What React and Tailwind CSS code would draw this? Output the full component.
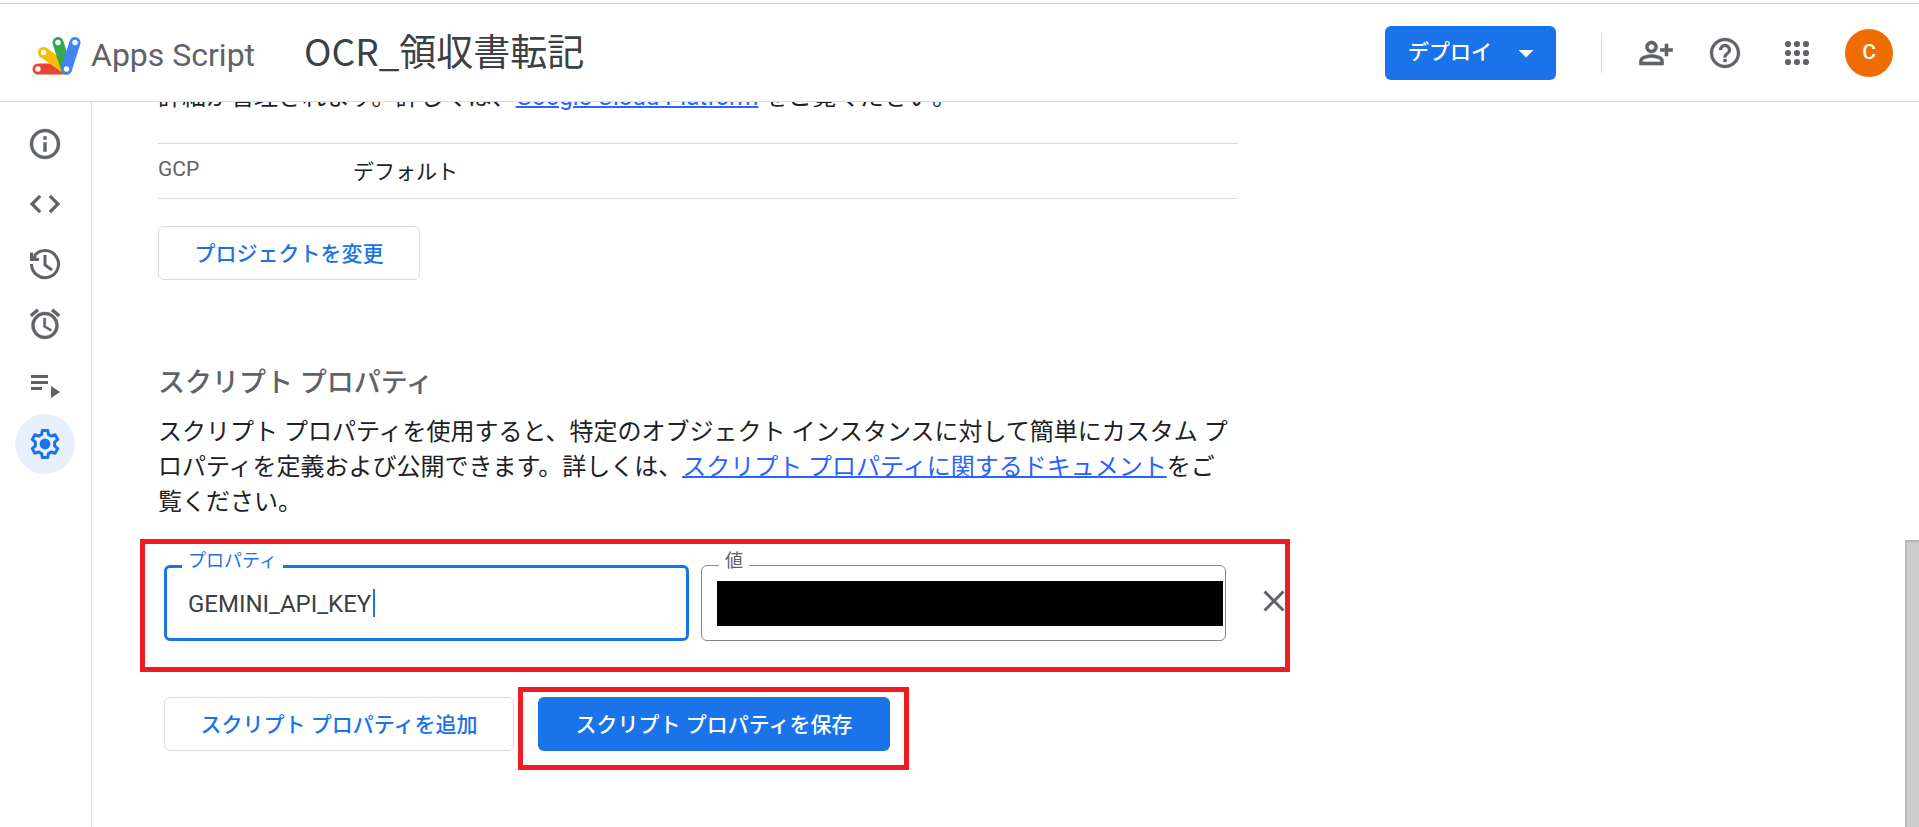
import { useState } from "react";
import { MdOutlineInfo, MdCode, MdAlarm, MdHelpOutline, MdOutlinePersonAddAlt, MdClose, MdArrowDropDown } from "react-icons/md";

// Icono de historial (flecha cuadrada + reloj)
function IconoHistorial({ className }) {
  return (
    <svg viewBox="0 0 36 36" className={className} fill="none" stroke="currentColor" strokeWidth="3">
      <path d="M4.5 18A13.5 13.5 0 1 0 7.2 10" />
      <path d="M4.5 6.5V13.500H12" />
      <path d="M5 13.5L9 9.500" />
      <path d="M18 9v10l7 5" />
    </svg>
  );
}

// Icono de ejecuciones (lista + play)
function IconoEjecuciones({ className }) {
  return (
    <svg viewBox="0 0 36 36" className={className} fill="currentColor">
      <path d="M4 9h17v3H4zM4 15h17v3H4zM4 21h11v3H4zM24 20v12l9-6z" />
    </svg>
  );
}

// Engranaje con el centro relleno
function IconoAjustes({ className }) {
  return (
    <svg viewBox="0 0 24 24" className={className}>
      <path
        fill="none"
        stroke="currentColor"
        strokeWidth="2"
        strokeLinejoin="round"
        d="M10.2 3h3.6l.5 2.7c.7.25 1.3.6 1.8 1.05l2.6-.9 1.8 3.1-2.1 1.8c.1.85.1 1.65 0 2.5l2.1 1.8-1.8 3.1-2.6-.9c-.5.45-1.1.8-1.8 1.05L13.8 21h-3.6l-.5-2.7c-.7-.25-1.3-.6-1.8-1.05l-2.6.9-1.8-3.1 2.1-1.8a9 9 0 0 1 0-2.5l-2.1-1.8 1.8-3.1 2.6.9c.5-.45 1.1-.8 1.8-1.05z"
      />
      <circle cx="12" cy="12" r="3.6" fill="currentColor" />
    </svg>
  );
}

function IconoApps({ className }) {
  return (
    <svg viewBox="0 0 36 36" className={className} fill="currentColor">
      {[9, 18, 27].map((y) => [9, 18, 27].map((x) => <circle key={`${x}-${y}`} cx={x} cy={y} r="3.1" />))}
    </svg>
  );
}

function Logo() {
  return (
    <svg viewBox="0 0 49 38" className="mt-1.5 w-[49px] h-[38px]" aria-hidden="true">
      <g strokeLinecap="round" strokeWidth="11" fill="none">
        <path d="M6 32H34" stroke="#ea4335" />
        <path d="M11.5 15.5L34.5 32" stroke="#fbbc04" />
        <path d="M26 5.5L34.5 32" stroke="#34a853" />
        <path d="M43 5.5L34.5 32" stroke="#4285f4" />
      </g>
      <g fill="#fff">
        <circle cx="6" cy="32" r="2.7" />
        <circle cx="11.5" cy="15.5" r="2.7" />
        <circle cx="26" cy="5.5" r="2.7" />
        <circle cx="43" cy="5.5" r="2.7" />
        <circle cx="34.5" cy="32" r="2.7" />
      </g>
    </svg>
  );
}

const menu = [
  { id: "info", label: "概要", Icono: MdOutlineInfo },
  { id: "editor", label: "エディタ", Icono: MdCode },
  { id: "historial", label: "プロジェクトの履歴", Icono: IconoHistorial },
  { id: "triggers", label: "トリガー", Icono: MdAlarm },
  { id: "ejecuciones", label: "実行数", Icono: IconoEjecuciones },
  { id: "ajustes", label: "プロジェクトの設定", Icono: IconoAjustes },
];

function Header() {
  return (
    <header className="flex shrink-0 items-center h-[102px] pl-8 pr-[26px] pt-1 border-b border-[#dadce0]">
      <Logo />
      <span className="ml-2.5 pt-1 text-[32px] leading-10 text-[#5f6368]">Apps Script</span>
      <h1 className="ml-[49px] pb-1.5 text-[37px] leading-[48px] text-[#3c4043] font-['Noto_Sans_CJK_JP',sans-serif]">OCR_領収書転記</h1>

      <div className="ml-auto flex items-center">
        <button className="flex items-center justify-between w-[171px] h-[54px] pl-[23px] pr-3 rounded-md bg-[#1a73e8] text-white text-[21px] font-medium">
          デプロイ
          <MdArrowDropDown className="size-9" />
        </button>
        <div className="ml-[45px] mr-9 w-px h-10 bg-[#dadce0]"></div>
        <div className="flex items-center text-[#5f6368]">
          <button aria-label="共有" className="mr-[33px]"><MdOutlinePersonAddAlt strokeWidth="0.4" className="size-9 [&>path[fill=none]]:stroke-none" /></button>
          <button aria-label="ヘルプ" className="mr-9"><MdHelpOutline strokeWidth="0.2" className="size-9 [&>path[fill=none]]:stroke-none" /></button>
          <button aria-label="Google アプリ"><IconoApps className="size-9" /></button>
        </div>
        <button className="ml-[30px] size-12 rounded-full bg-[#ef6c00] text-white text-[21px] font-medium">C</button>
      </div>
    </header>
  );
}

function Sidebar({ activo, onSelect }) {
  return (
    <nav className="flex flex-col shrink-0 items-center w-[92px] pt-3 pr-px border-r border-[#dadce0]">
      {menu.map(({ id, label, Icono }) => (
        <button
          key={id}
          aria-label={label}
          onClick={() => onSelect(id)}
          className={`flex items-center justify-center size-[60px] rounded-full ${activo === id ? "bg-[#e8f0fe] text-[#1a73e8]" : "text-[#5f6368] [&_path[fill=none]]:stroke-none"}`}
        >
          <Icono strokeWidth="0.3" className="size-9" />
        </button>
      ))}
    </nav>
  );
}

export default function App() {
  const [activo, setActivo] = useState("ajustes");
  const [propiedad, setPropiedad] = useState("GEMINI_API_KEY");
  const [valor, setValor] = useState("");

  return (
    <div lang="ja" className="flex flex-col h-screen overflow-hidden bg-white text-[#202124] font-['Roboto','Noto_Sans_CJK_JP',sans-serif]">
      <div className="shrink-0 h-1 -mb-1 border-b border-[#cccccc]"></div>
      <Header />

      <div className="flex flex-1 min-h-0">
        <Sidebar activo={activo} onSelect={setActivo} />

        <main className="flex-1 min-w-0 overflow-hidden pl-[66px]">
          <div className="max-w-[1080px]">
            {/* Proyecto de GCP */}
            <p className="-mt-[22px] text-2xl leading-[35px]">
              詳細が管理されます。詳しくは、<a href="#gcp" className="text-[#2962ff] underline decoration-2">Google Cloud Platform</a> をご覧ください。
            </p>
            <dl className="flex mt-7 h-14 border-y border-[#dadce0] text-[21px]">
              <dt className="w-[195px] pt-3 leading-[26px] text-[#5f6368]">GCP</dt>
              <dd className="pt-3 leading-8">デフォルト</dd>
            </dl>
            <button className="mt-[27px] h-[54px] w-[262px] pt-1 rounded-md border border-[#dadce0] text-[21px] font-medium text-[#1a73e8]">
              プロジェクトを変更
            </button>

            {/* Propiedades del script */}
            <h2 className="mt-[83px] text-[27px] leading-10 font-medium text-[#5f6368]">スクリプト プロパティ</h2>
            <p className="mt-3 text-2xl leading-[35px]">
              スクリプト プロパティを使用すると、特定のオブジェクト インスタンスに対して簡単にカスタム プロパティを定義および公開できます。詳しくは、<a href="#docs" className="text-[#2962ff] underline decoration-2">スクリプト プロパティに関するドキュメント</a>をご覧ください。
            </p>
          </div>

          <div className="mt-[19px] -ml-[18px] w-[1150px] h-[133px] border-5 border-[#ee1c25] pl-[19px] pt-[21px]">
            <div className="flex gap-3">
              <div className="relative shrink-0 w-[525px] h-[76px]">
                <label htmlFor="propiedad" className="absolute left-[18px] -top-4 px-1.5 bg-white text-lg leading-6 text-[#1a73e8]">プロパティ</label>
                <input
                  id="propiedad"
                  value={propiedad}
                  onChange={(e) => setPropiedad(e.target.value)}
                  className="w-full h-full px-[21px] pt-0.5 rounded-md border-3 border-[#1a73e8] text-2xl text-[#3c4043] outline-none"
                />
                {/* Cursor de texto */}
                <span className="absolute left-[209px] top-6 w-0.5 h-7 bg-[#1a73e8]"></span>
              </div>
              <div className="relative shrink-0 w-[525px] h-[76px]">
                <label htmlFor="valor" className="absolute left-[18px] -top-4 px-1.5 bg-white text-lg leading-6 text-[#5f6368]">値</label>
                <input
                  id="valor"
                  value={valor}
                  onChange={(e) => setValor(e.target.value)}
                  className="w-full h-full px-[22px] rounded-md border border-[#80868b] text-2xl outline-none"
                />
                <span className="absolute left-4 right-[3px] top-4 h-[45px] bg-black"></span>
              </div>
              <button aria-label="削除" className="shrink-0 ml-[18px] mt-[18px] size-9 text-[#5f6368]">
                <MdClose className="size-9" />
              </button>
            </div>
          </div>

          <div className="flex items-start mt-[15px] ml-1.5">
            <button className="mt-2.5 h-[54px] w-[350px] pt-1 rounded-md border border-[#dadce0] text-[21px] font-medium text-[#1a73e8]">
              スクリプト プロパティを追加
            </button>
            <div className="ml-1 h-[83px] w-[391px] border-5 border-[#ee1c25] pl-[15px] pt-[5px]">
              <button className="h-[54px] w-[352px] pt-1 rounded-md bg-[#1a73e8] text-[21px] font-medium text-white">
                スクリプト プロパティを保存
              </button>
            </div>
          </div>
        </main>

        {/* Barra de desplazamiento */}
        <div className="flex flex-col justify-end w-3.5">
          <div className="h-[287px] bg-[#cccccc] border-t-2 border-l-2 border-[#b8b8b8]"></div>
        </div>
      </div>
    </div>
  );
}
